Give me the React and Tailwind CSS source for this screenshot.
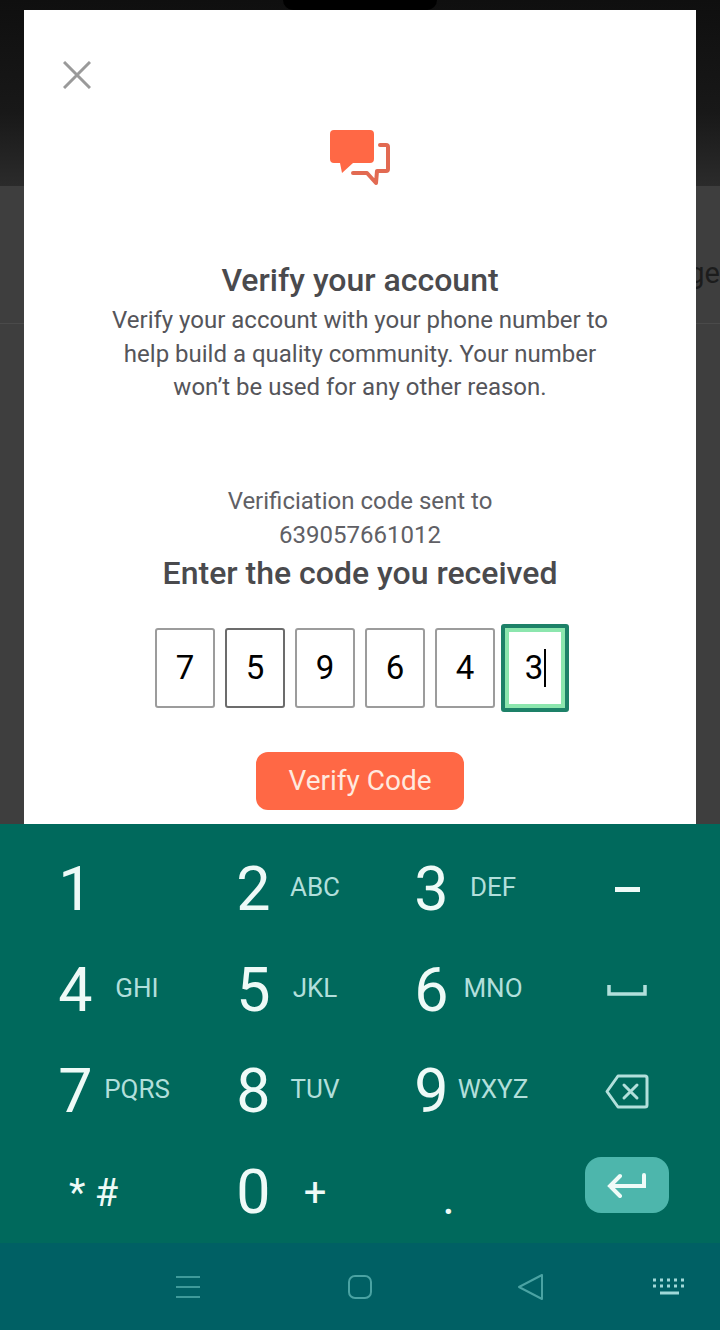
import React from 'react';

const keyRows = [
    [['1', ''], ['2', 'ABC'], ['3', 'DEF']],
    [['4', 'GHI'], ['5', 'JKL'], ['6', 'MNO']],
    [['7', 'PQRS'], ['8', 'TUV'], ['9', 'WXYZ']],
];

const ChatIcon = () => (
    <svg width="60" height="55" viewBox="0 0 60 55" fill="none">
        <path d="M4 0H40Q44 0 44 4V29Q44 33 40 33H23L12 43L10 33H4Q0 33 0 29V4Q0 0 4 0Z" fill="#ff6845" />
        <path d="M50 15H56Q58 15 58 17V39Q58 41 56 41H47L46 53L37 43H23" stroke="#e26a52" strokeWidth="4" strokeLinecap="round" strokeLinejoin="round" />
    </svg>
);

const CloseIcon = () => (
    <svg width="28" height="28" viewBox="0 0 28 28" fill="none" stroke="#9a9a9a" strokeWidth="3">
        <path d="M1 1L27 27M27 1L1 27" />
    </svg>
);

const Key = ({ digit, letters }) => (
    <div className="flex h-[101px] w-[178.5px] items-center">
        <span className="w-[49px] text-center text-[61px] leading-none text-[#eefaf7]">{digit}</span>
        {letters && <span className="-mt-[6px] ml-[1px] w-[72px] text-center text-[26px] leading-none text-[#b2dfdb]">{letters}</span>}
    </div>
);

const App = () => {
    const code = ['7', '5', '9', '6', '4'];
    return (
        <div className="flex h-[1330px] w-[720px] flex-col overflow-hidden bg-[#3e3e3e] font-['Roboto',sans-serif]">
            <div className="relative h-[824px] shrink-0 overflow-hidden">
                {/* dimmed page behind the dialog */}
                <div className="h-[186px] bg-[linear-gradient(to_bottom,#0f0f0f,#181818_60%,#2b2b2b)]" />
                <div className="flex h-[138px] items-center justify-end border-b border-[#4a4a4a] bg-[#3e3e3e] pt-[38px] text-[29px] leading-none text-[#1c1c1c]">ge</div>
                <div className="absolute top-0 left-[283px] h-[10px] w-[154px] rounded-b-[10px] bg-black" />

                <div className="absolute top-[10px] left-[24px] flex h-[814px] w-[672px] flex-col items-center bg-white">
                    <div className="w-full pt-[51px] pl-[39px]">
                        <CloseIcon />
                    </div>
                    <div className="mt-[41px] h-[55px]"><ChatIcon /></div>
                    <h1 className="mt-[77px] text-[32px] leading-[36px] font-medium text-[#4a4a4d]">Verify your account</h1>
                    <p className="mt-[6px] w-[520px] text-center text-[24px] leading-[33.5px] text-[#55555a]">
                        Verify your account with your phone number to help build a quality community. Your number won’t be used for any other reason.
                    </p>
                    <p className="mt-[79px] w-[300px] text-center text-[24px] leading-[34px] text-[#606065]">
                        Verificiation code sent to 639057661012
                    </p>
                    <h2 className="mt-[2px] text-[32px] leading-[38px] font-medium text-[#4a4a4d]">Enter the code you received</h2>
                    <div className="mt-[32px] ml-[4px] flex items-center gap-[10px]">
                        {code.map((digit, i) => (
                            <div key={i} className={`flex h-[80px] w-[60px] items-center justify-center rounded-[3px] border-2 text-[33px] text-black ${i === 1 ? 'border-[#6c6c6c]' : 'border-[#9c9c9c]'}`}>
                                {digit}
                            </div>
                        ))}
                        <div className="-ml-[4px] flex h-[88px] w-[68px] items-center justify-center rounded-[3px] border-[4px] border-[#1d8168] pl-[1px] text-[33px] text-black shadow-[inset_0_0_0_4px_#8ce6ae]">
                            3<span className="ml-[1px] h-[38px] w-[2px] bg-black" />
                        </div>
                    </div>
                    <button type="button" className="mt-[40px] h-[58px] w-[208px] rounded-[12px] bg-[#ff6845] text-[28px] text-[#ffe9df]">Verify Code</button>
                </div>
            </div>

            <div className="flex h-[419px] shrink-0 bg-[#00695c] pt-[15px]">
                <div className="w-[585px] shrink-0 pl-[51px]">
                    {keyRows.map((row, i) => (
                        <div key={i} className="flex">
                            {row.map(([digit, letters]) => <Key key={digit} digit={digit} letters={letters} />)}
                        </div>
                    ))}
                    <div className="flex">
                        <div className="flex h-[101px] w-[178.5px] items-center">
                            <span className="w-[85px] text-center text-[38px] leading-none text-[#eefaf7]">* #</span>
                        </div>
                        <div className="flex h-[101px] w-[178.5px] items-center">
                            <span className="w-[49px] text-center text-[61px] leading-none text-[#eefaf7]">0</span>
                            <span className="ml-[1px] w-[72px] text-center text-[40px] leading-none text-[#eefaf7]">+</span>
                        </div>
                        <div className="flex h-[101px] w-[178.5px] items-end pb-[21px]">
                            <span className="w-[83px] text-center text-[48px] leading-none text-[#eefaf7]">.</span>
                        </div>
                    </div>
                </div>
                <div className="flex w-[84px] flex-col items-center">
                    <div className="flex h-[101px] w-full items-center justify-center">
                        <span className="h-[5px] w-[25px] bg-[#eefaf7]" />
                    </div>
                    <div className="flex h-[101px] w-full items-center justify-center">
                        <svg width="40" height="11" viewBox="0 0 40 11" fill="none"><path d="M2 0V9H38V0" stroke="#b2dfdb" strokeWidth="3.5" /></svg>
                    </div>
                    <div className="flex h-[101px] w-full items-center justify-center">
                        <svg width="44" height="35" viewBox="0 0 44 35" fill="none" stroke="#b2dfdb" strokeWidth="3" strokeLinejoin="round" strokeLinecap="round">
                            <path d="M13 2H40Q42 2 42 4V31Q42 33 40 33H13L2 17.5Z" />
                            <path d="M19 11L32 24M32 11L19 24" />
                        </svg>
                    </div>
                    <div className="flex h-[101px] w-full items-center justify-center">
                        <div className="mb-[15px] flex h-[56px] w-[84px] items-center justify-center rounded-[16px] bg-[#4db6ac]">
                            <svg width="40" height="25" viewBox="0 0 40 25" fill="none" stroke="#f0fbf8" strokeWidth="4" strokeLinecap="round">
                                <path d="M37 2V13H3M13 3L3 13L13 23" />
                            </svg>
                        </div>
                    </div>
                </div>
            </div>

            <div className="flex h-[87px] shrink-0 items-center bg-[#006064] pl-[176px]">
                <svg width="24" height="22" viewBox="0 0 24 22" fill="none" stroke="#3f9a9a" strokeWidth="2"><path d="M0 1H24M0 11H24M0 21H24" /></svg>
                <svg className="ml-[148px]" width="24" height="24" viewBox="0 0 24 24" fill="none" stroke="#4aa3a3" strokeWidth="2"><rect x="1" y="1" width="22" height="22" rx="6" /></svg>
                <svg className="ml-[146px]" width="25" height="26" viewBox="0 0 25 26" fill="none" stroke="#4aa3a3" strokeWidth="2" strokeLinejoin="round"><path d="M1 13L24 1V25Z" /></svg>
                <svg className="ml-[110px]" width="33" height="17" viewBox="0 0 33 17" fill="none" stroke="#a0d8d8" strokeWidth="3" strokeDasharray="3 4">
                    <path d="M0 2H33M0 8H33" />
                    <path d="M7 15H26" strokeDasharray="none" />
                </svg>
            </div>
        </div>
    );
};

export default App;
